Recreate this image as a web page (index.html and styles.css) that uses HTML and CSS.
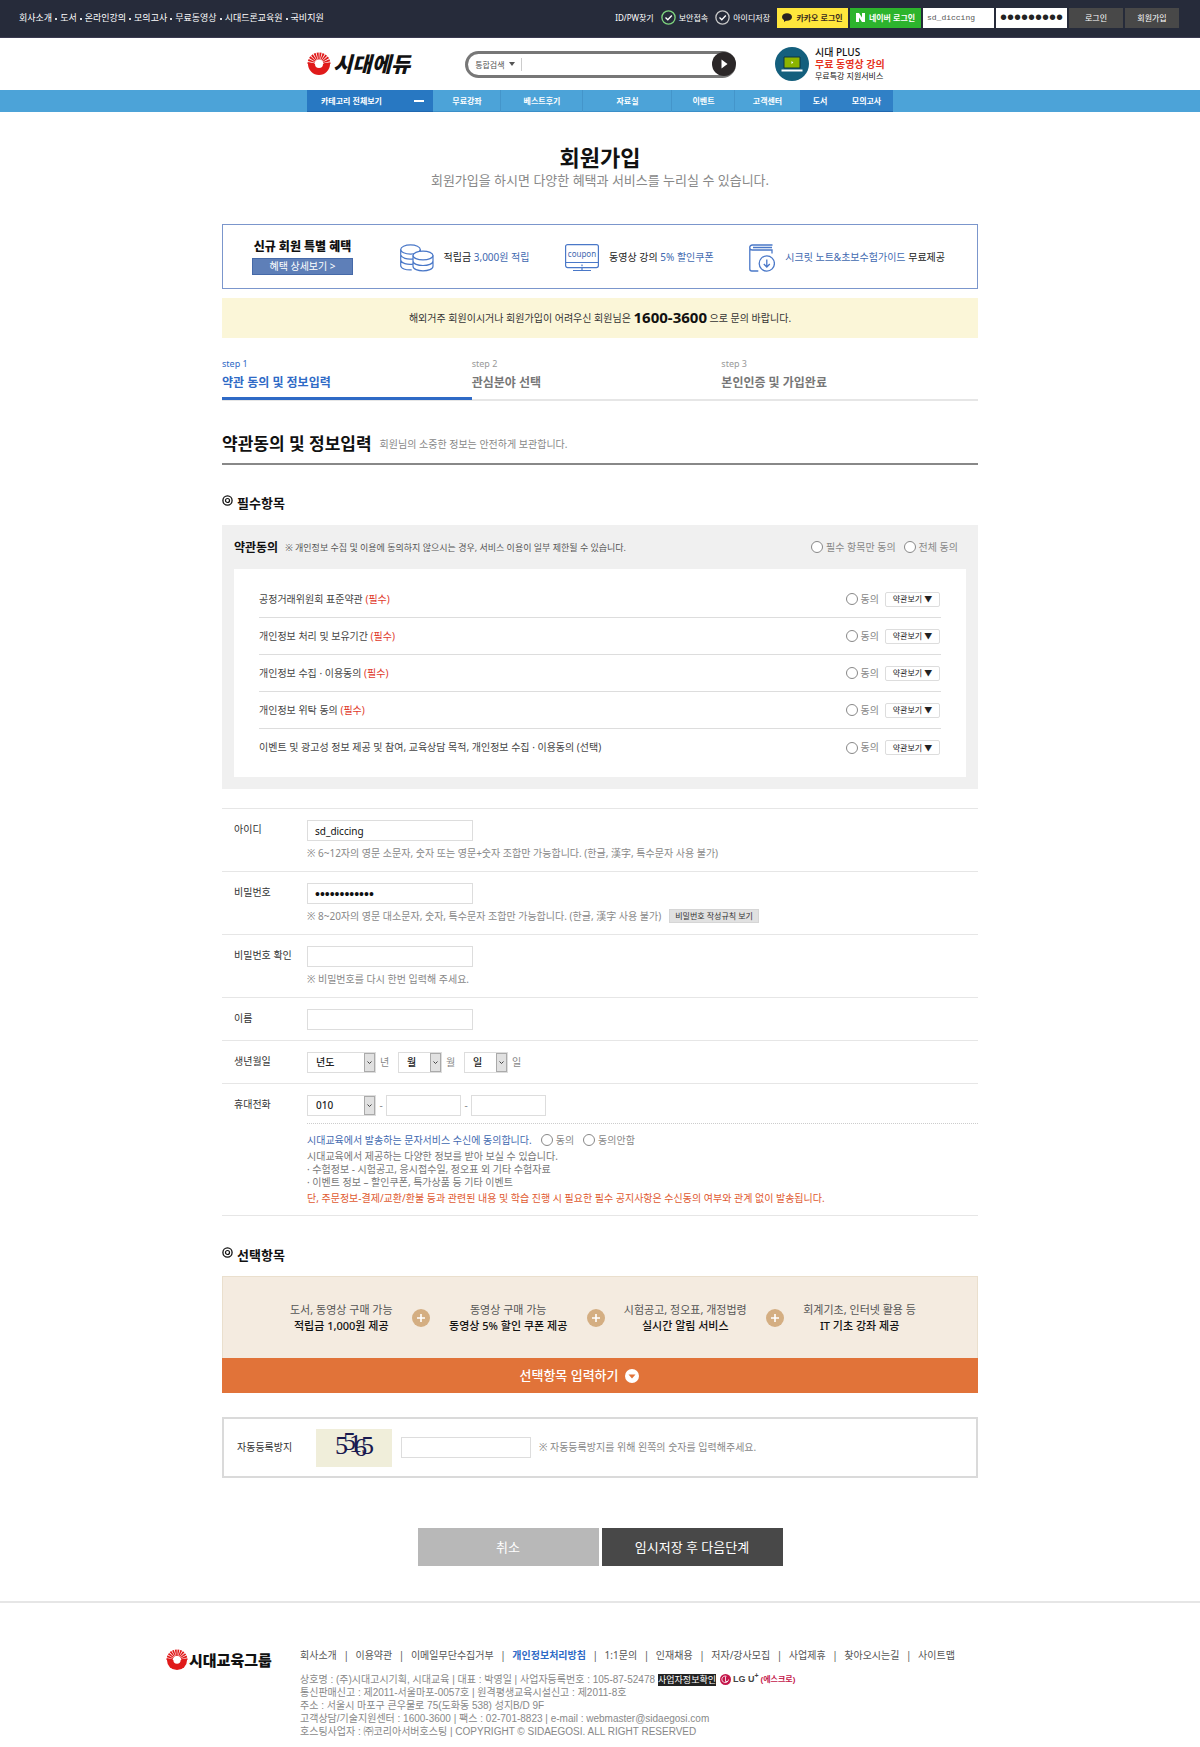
FILE: index.html
```html
<!DOCTYPE html>
<html lang="ko">
<head>
<meta charset="utf-8">
<meta name="viewport" content="width=device-width, initial-scale=1">
<title>회원가입 - 시대에듀</title>
<link rel="stylesheet" href="styles.css">
</head>
<body>
<svg width="0" height="0" class="defs" aria-hidden="true">
  <symbol id="sun" viewBox="0 0 24 24">
    <path d="M1 12a11 11 0 0 0 22 0z" fill="#e01a1a"/>
    <path d="M4 12a8 8 0 0 1 16 0" fill="none" stroke="#e01a1a" stroke-width="7" stroke-dasharray="1.5 .65"/>
    <circle cx="12" cy="12" r="4" fill="#fff"/>
  </symbol>
  <symbol id="target" viewBox="0 0 11 11">
    <circle cx="5.5" cy="5.5" r="4.6" fill="none" stroke="#111" stroke-width="1.3"/>
    <circle cx="5.5" cy="5.5" r="2" fill="none" stroke="#111" stroke-width="1.2"/>
  </symbol>
  <symbol id="plus" viewBox="0 0 18 18">
    <circle cx="9" cy="9" r="9" fill="#d4ae82"/>
    <path d="M9 5v8M5 9h8" stroke="#fff" stroke-width="1.6"/>
  </symbol>
</svg>

<header>
  <div class="topbar">
    <nav class="top-links">
      <a href="#">회사소개</a><i></i><a href="#">도서</a><i></i><a href="#">온라인강의</a><i></i><a href="#">모의고사</a><i></i><a href="#">무료동영상</a><i></i><a href="#">시대드론교육원</a><i></i><a href="#">국비지원</a>
    </nav>
    <form class="top-login">
      <a href="#">ID/PW찾기</a>
      <a href="#" class="check"><svg width="15" height="15" viewBox="0 0 15 15" fill="none"><circle cx="7.500" cy="7.500" r="6.600" stroke="#7fd67f" stroke-width="1.300"/><path d="M4.500 7.500l2.300 2.300 4-4.300" stroke="#fff" stroke-width="1.300"/></svg>보안접속</a>
      <a href="#" class="check"><svg width="15" height="15" viewBox="0 0 15 15" fill="none"><circle cx="7.500" cy="7.500" r="6.600" stroke="#c8c8c8" stroke-width="1.300"/><path d="M4.500 7.500l2.300 2.300 4-4.300" stroke="#fff" stroke-width="1.300"/></svg>아이디저장</a>
      <div class="top-fields">
        <button type="button" class="kakao"><svg width="10" height="9" viewBox="0 0 10 9"><ellipse cx="5" cy="4" rx="5" ry="3.800" fill="#2a2222"/><path d="M2 6v3l3-2z" fill="#2a2222"/></svg>카카오 로그인</button>
        <button type="button" class="naver"><svg width="9" height="9" viewBox="0 0 9 9"><path d="M0 0h3l3 4.500V0h3v9H6L3 4.500V9H0z" fill="#fff"/></svg>네이버 로그인</button>
        <input type="text" value="sd_diccing" aria-label="아이디">
        <input type="password" value="sidaeedu2011" aria-label="비밀번호" class="top-pw">
        <button type="button" class="grey">로그인</button>
        <button type="button" class="grey">회원가입</button>
      </div>
    </form>
  </div>

  <div class="brand wrap-narrow">
    <a href="#" class="logo"><svg width="24" height="24"><use href="#sun"/></svg><span>시대에듀</span></a>
    <form class="search">
      <button type="button" class="search-kind">통합검색<svg width="6" height="4" viewBox="0 0 6 4"><path d="M0 0h6L3 4z" fill="#555"/></svg></button>
      <input type="text" aria-label="검색어">
      <button type="button" class="search-go" aria-label="검색"><svg width="24" height="24" viewBox="0 0 24 24"><circle cx="12" cy="12" r="12" fill="#2b2728"/><path d="M9.500 7.500v9l6-4.500z" fill="#fff"/></svg></button>
    </form>
    <a href="#" class="plus-banner">
      <svg width="34" height="34" viewBox="0 0 34 34"><circle cx="17" cy="17" r="17" fill="#145f7d"/><path d="M9 10h16v11H9z" fill="#8cb400" stroke="#0d3442"/><path d="M6.500 22.500h21v2h-21z" fill="#fff"/><path d="M16.500 14l1.800 1.500-1.800 1.500z" fill="#fff"/></svg>
      <span class="plus-text"><b>시대 PLUS</b><strong>무료 동영상 강의</strong><small>무료특강 지원서비스</small></span>
    </a>
  </div>

  <nav class="gnb">
    <div class="gnb-inner wrap-narrow">
      <a href="#" class="gnb-all">카테고리 전체보기<svg width="10" height="2"><path d="M0 1h10" stroke="#fff" stroke-width="2"/></svg></a>
      <a href="#">무료강좌</a><a href="#">베스트후기</a><a href="#">자료실</a><a href="#">이벤트</a><a href="#">고객센터</a>
      <a href="#" class="gnb-dark">도서</a><a href="#" class="gnb-dark">모의고사</a>
    </div>
  </nav>
</header>

<main class="wrap">
  <h1>회원가입</h1>
  <p class="lead">회원가입을 하시면 다양한 혜택과 서비스를 누리실 수 있습니다.</p>

  <section class="benefits">
    <div class="benefit-head">
      <h2>신규 회원 특별 혜택</h2>
      <button type="button">혜택 상세보기 &gt;</button>
    </div>
    <div class="benefit">
      <svg width="34" height="28" viewBox="0 0 34 28" fill="none" stroke="#4a78c8" stroke-width="1.200"><ellipse cx="10.500" cy="5.500" rx="9.800" ry="4.600"/><path d="M.7 5.500v16c0 3 5 4.800 11 4.400M.7 11c1 3 6 4.800 12.500 4M.7 16.200c1 3 6 4.800 12.500 4M20.300 5.500v2"/><ellipse cx="23" cy="11.500" rx="10" ry="4.400" fill="#fff"/><path d="M13 11.500v10.800c0 6 20 6 20 0V11.500M13 17c0 6 20 6 20 0"/></svg>
      <p>적립금 <em>3,000원 적립</em></p>
    </div>
    <div class="benefit">
      <svg width="34" height="28" viewBox="0 0 34 28" fill="none" stroke="#4a78c8" stroke-width="1.200"><rect x=".6" y=".6" width="32.800" height="23" rx="2"/><path d="M1 18.500h32M8 26.500h18M17 20.500v1.800M17 24v2"/><text x="17" y="12.500" text-anchor="middle" class="coupon-text">coupon</text></svg>
      <p>동영상 강의 <em>5% 할인쿠폰</em></p>
    </div>
    <div class="benefit">
      <svg width="26" height="28" viewBox="0 0 26 28" fill="none" stroke="#4a78c8" stroke-width="1.300"><path d="M23.500 1H3.500C-.2 1-.2 6 3.500 6h19.500v3.500M.8 3.500V25c0 1.200.8 2 2 2h6.500M4 3.500h19"/><circle cx="17.800" cy="19.500" r="7.600"/><path d="M17.800 15.500v7M14.800 20l3 3 3-3"/></svg>
      <p><em>시크릿 노트&amp;초보수험가이드</em> 무료제공</p>
    </div>
  </section>

  <p class="notice">해외거주 회원이시거나 회원가입이 어려우신 회원님은 <strong>1600-3600</strong> 으로 문의 바랍니다.</p>

  <ol class="steps">
    <li class="current"><span>step 1</span><b>약관 동의 및 정보입력</b></li>
    <li><span>step 2</span><b>관심분야 선택</b></li>
    <li><span>step 3</span><b>본인인증 및 가입완료</b></li>
  </ol>

  <div class="section-head"><h2>약관동의 및 정보입력</h2><p>회원님의 소중한 정보는 안전하게 보관합니다.</p></div>

  <form>
    <h3 class="group-title"><svg width="11" height="11"><use href="#target"/></svg>필수항목</h3>
    <section class="terms">
      <div class="terms-head">
        <h4>약관동의</h4>
        <p>※ 개인정보 수집 및 이용에 동의하지 않으시는 경우, 서비스 이용이 일부 제한될 수 있습니다.</p>
        <div class="terms-all">
          <label class="radio"><input type="radio" name="all">필수 항목만 동의</label>
          <label class="radio"><input type="radio" name="all">전체 동의</label>
        </div>
      </div>
      <ul class="terms-list">
        <li><span>공정거래위원회 표준약관 <em>(필수)</em></span><label class="radio"><input type="radio" name="t1">동의</label><button type="button">약관보기 ▼</button></li>
        <li><span>개인정보 처리 및 보유기간 <em>(필수)</em></span><label class="radio"><input type="radio" name="t2">동의</label><button type="button">약관보기 ▼</button></li>
        <li><span>개인정보 수집 · 이용동의 <em>(필수)</em></span><label class="radio"><input type="radio" name="t3">동의</label><button type="button">약관보기 ▼</button></li>
        <li><span>개인정보 위탁 동의 <em>(필수)</em></span><label class="radio"><input type="radio" name="t4">동의</label><button type="button">약관보기 ▼</button></li>
        <li><span>이벤트 및 광고성 정보 제공 및 참여, 교육상담 목적, 개인정보 수집 · 이용동의 (선택)</span><label class="radio"><input type="radio" name="t5">동의</label><button type="button">약관보기 ▼</button></li>
      </ul>
    </section>

    <div class="fields">
      <div class="field">
        <label class="name" for="uid">아이디</label>
        <div class="control">
          <input class="text" type="text" id="uid" value="sd_diccing">
          <p class="hint">※ 6~12자의 영문 소문자, 숫자 또는 영문+숫자 조합만 가능합니다. (한글, 漢字, 특수문자 사용 불가)</p>
        </div>
      </div>
      <div class="field">
        <label class="name" for="pw">비밀번호</label>
        <div class="control">
          <input class="text" type="password" id="pw" value="sidaeedu2011">
          <p class="hint">※ 8~20자의 영문 대소문자, 숫자, 특수문자 조합만 가능합니다. (한글, 漢字 사용 불가)<button type="button">비밀번호 작성규칙 보기</button></p>
        </div>
      </div>
      <div class="field">
        <label class="name" for="pw2">비밀번호 확인</label>
        <div class="control">
          <input class="text" type="password" id="pw2">
          <p class="hint">※ 비밀번호를 다시 한번 입력해 주세요.</p>
        </div>
      </div>
      <div class="field">
        <label class="name" for="uname">이름</label>
        <div class="control"><input class="text" type="text" id="uname"></div>
      </div>
      <div class="field">
        <label class="name" for="year">생년월일</label>
        <div class="control">
          <div class="inline">
            <select id="year" class="wide"><option>년도</option></select><label for="year" class="unit">년</label>
            <select id="month"><option>월</option></select><label for="month" class="unit">월</label>
            <select id="day"><option>일</option></select><label for="day" class="unit">일</label>
          </div>
        </div>
      </div>
      <div class="field">
        <label class="name" for="tel1">휴대전화</label>
        <div class="control">
          <div class="inline">
            <select id="tel1" class="wide"><option>010</option></select><span class="dash">-</span>
            <input class="text tel" type="text" aria-label="휴대전화 가운데 자리"><span class="dash">-</span>
            <input class="text tel" type="text" aria-label="휴대전화 끝자리">
          </div>
          <div class="sms">
            <div class="sms-agree"><span>시대교육에서 발송하는 문자서비스 수신에 동의합니다.</span><label class="radio"><input type="radio" name="sms">동의</label><label class="radio"><input type="radio" name="sms">동의안함</label></div>
            <p>시대교육에서 제공하는 다양한 정보를 받아 보실 수 있습니다.<br>· 수험정보 - 시험공고, 응시접수일, 정오표 외 기타 수험자료<br>· 이벤트 정보 – 할인쿠폰, 특가상품 등 기타 이벤트</p>
            <p class="warn">단, 주문정보-결제/교환/환불 등과 관련된 내용 및 학습 진행 시 필요한 필수 공지사항은 수신동의 여부와 관계 없이 발송됩니다.</p>
          </div>
        </div>
      </div>
    </div>

    <h3 class="group-title optional"><svg width="11" height="11"><use href="#target"/></svg>선택항목</h3>
    <div class="perks">
      <p>도서, 동영상 구매 가능<b>적립금 1,000원 제공</b></p>
      <svg width="18" height="18"><use href="#plus"/></svg>
      <p>동영상 구매 가능<b>동영상 5% 할인 쿠폰 제공</b></p>
      <svg width="18" height="18"><use href="#plus"/></svg>
      <p>시험공고, 정오표, 개정법령<b>실시간 알림 서비스</b></p>
      <svg width="18" height="18"><use href="#plus"/></svg>
      <p>회계기초, 인터넷 활용 등<b>IT 기초 강좌 제공</b></p>
    </div>
    <button type="button" class="expand">선택항목 입력하기<svg width="14" height="14" viewBox="0 0 14 14"><circle cx="7" cy="7" r="7" fill="#fff"/><path d="M3.500 5.500h7L7 9.500z" fill="#e17339"/></svg></button>

    <div class="captcha">
      <label for="cap">자동등록방지</label>
      <svg width="76" height="38" viewBox="0 0 76 38" class="captcha-img"><rect width="76" height="38" fill="#f0eeda"/><text x="19 27 33 38 45" y="25 21 23 27 25">55165</text></svg>
      <input class="text" type="text" id="cap">
      <p>※ 자동등록방지를 위해 왼쪽의 숫자를 입력해주세요.</p>
    </div>

    <div class="actions">
      <button type="button" class="cancel">취소</button>
      <button type="submit" class="next">임시저장 후 다음단계</button>
    </div>
  </form>
</main>

<footer>
  <div class="footer-inner">
    <a href="#" class="footer-logo"><svg width="22" height="22"><use href="#sun"/></svg><span>시대교육그룹</span></a>
    <div class="footer-body">
      <nav class="footer-links">
        <a href="#">회사소개</a><i>|</i><a href="#">이용약관</a><i>|</i><a href="#">이메일무단수집거부</a><i>|</i><a href="#" class="privacy">개인정보처리방침</a><i>|</i><a href="#">1:1문의</a><i>|</i><a href="#">인재채용</a><i>|</i><a href="#">저자/강사모집</a><i>|</i><a href="#">사업제휴</a><i>|</i><a href="#">찾아오시는길</a><i>|</i><a href="#">사이트맵</a>
      </nav>
      <address>
        <div class="biz">상호명 : (주)시대고시기획, 시대교육 | 대표 : 박영일 | 사업자등록번호 : 105-87-52478 <a href="#" class="biz-check">사업자정보확인</a><a href="#" class="lg"><svg width="11" height="11" viewBox="0 0 11 11"><circle cx="5.500" cy="5.500" r="5.500" fill="#c4164a"/><path d="M5.500 2.500v5H8M8.500 5.500A3.300 3.300 0 1 1 6.500 2.300" stroke="#fff" stroke-width=".8" fill="none"/></svg><b>LG U<sup>+</sup></b><strong>(에스크로)</strong></a></div>
        <div>통신판매신고 : 제2011-서울마포-0057호 | 원격평생교육시설신고 : 제2011-8호</div>
        <div>주소 : 서울시 마포구 큰우물로 75(도화동 538) 성지B/D 9F</div>
        <div>고객상담/기술지원센터 : 1600-3600 | 팩스 : 02-701-8823 | e-mail : webmaster@sidaegosi.com</div>
        <div>호스팅사업자 : ㈜코리아서버호스팅 | COPYRIGHT © SIDAEGOSI. ALL RIGHT RESERVED</div>
      </address>
    </div>
  </div>
</footer>
</body>
</html>
```
FILE: styles.css
```css
:root {
  --line: #e6e6e6;
  --blue: #2f6ac6;
  --grey: #888;
}

* { box-sizing: border-box; }

body {
  margin: 0;
  background: #fff;
  color: #333;
  font: 10px/13px "Noto Sans", "Noto Sans CJK KR", sans-serif;
}

h1, h2, h3, h4, p, ul, ol { margin: 0; padding: 0; }
ul, ol { list-style: none; }
a { color: inherit; text-decoration: none; }
em, i, address { font-style: normal; }
svg { flex: none; }
.defs { position: absolute; }

button, input, select {
  margin: 0;
  padding: 0;
  border: 0;
  border-radius: 0;
  font: inherit;
  color: inherit;
}

.wrap { max-width: 756px; margin: 0 auto; }
.wrap-narrow { max-width: 586px; margin: 0 auto; }

/* Top bar */
.topbar {
  display: flex;
  justify-content: space-between;
  align-items: center;
  height: 38px;
  padding: 0 21px 2px 19px;
  background: #262b3a;
  border-bottom: 1px solid #3a3a50;
  color: #fff;
  font-size: 8px;
}
.top-links { display: flex; align-items: center; font-size: 9px; }
.top-links i { width: 2px; height: 2px; margin: 2px 3px 0; background: #ddd; }
.top-login { display: flex; align-items: center; gap: 7px; }
.check { display: flex; align-items: center; gap: 3px; }
.top-fields { display: flex; gap: 2px; }
.top-fields button {
  display: flex;
  align-items: center;
  justify-content: center;
  gap: 4px;
  height: 20px;
}
.top-fields input { width: 71px; height: 20px; padding: 0 4px; background: #fff; color: #555; font-family: "Liberation Mono", monospace; }
.top-fields .top-pw { font: 20px/20px "Liberation Sans", sans-serif; color: #222; }
.top-fields .kakao { width: 71px; background: #ffe63c; color: #3a2a1c; font-weight: 700; }
.top-fields .naver { width: 71px; background: #2db42d; font-weight: 700; }
.top-fields .grey { width: 54px; background: #484848; }

/* Brand row */
.brand {
  display: flex;
  align-items: center;
  justify-content: space-between;
  height: 52px;
}
.logo { display: flex; align-items: center; gap: 2px; color: #111; font-size: 21px; font-weight: 900; font-style: italic; line-height: 24px; }
.search {
  display: flex;
  align-items: center;
  width: 271px;
  height: 27px;
  margin-left: 16px;
  padding-left: 7px;
  border: 3px solid #777;
  border-right: 0;
  border-radius: 14px;
}
.search-kind { display: flex; align-items: center; gap: 4px; background: none; font-size: 8px; color: #555; }
.search input { flex: 1; min-width: 0; height: 13px; margin-left: 6px; border-left: 1px solid #ccc; outline: 0; }
.search-go { display: flex; border-radius: 12px; background: none; }
.plus-banner { display: flex; align-items: center; gap: 6px; width: 118px; color: #111; }
.plus-text { display: flex; flex-direction: column; line-height: 12px; white-space: nowrap; }
.plus-text b { font-weight: 500; }
.plus-text strong { color: #e6321e; }
.plus-text small { font-size: 8px; }

/* Main navigation */
.gnb { background: #4ca3d8; color: #fff; font-size: 8px; font-weight: 700; }
.gnb-inner {
  display: grid;
  grid-template-columns: 126fr 68fr 82fr 89fr 63fr 65fr 40fr 53fr;
}
.gnb a { display: flex; align-items: center; justify-content: center; height: 22px; border-bottom: 1px solid #3b8fc8; }
.gnb a:not(.gnb-all) + a:not(.gnb-dark) { box-shadow: -1px 0 #4495ca; }
.gnb .gnb-all { justify-content: space-between; padding: 0 9px 0 14px; background: #2878c2; border-color: #2068b0; }
.gnb .gnb-dark { background: #3080c6; border-color: #2068b0; }

/* Heading */
h1 { margin-top: 33px; color: #111; font-size: 22px; line-height: 24px; font-weight: 700; text-align: center; }
.lead { margin-top: 2px; color: var(--grey); font-size: 13px; line-height: 18px; text-align: center; }

.benefits {
  display: flex;
  align-items: center;
  justify-content: space-between;
  height: 65px;
  margin-top: 35px;
  padding: 0 32px 0 29px;
  border: 1px solid #7b96cc;
  color: #222;
}
.benefit-head { width: 101px; margin-right: 11px; }
.benefit-head h2 { color: #111; font-size: 12px; line-height: 15px; font-weight: 900; text-align: center; white-space: nowrap; }
.benefit-head button { width: 100%; height: 17px; margin-top: 4px; background: #5e7fb8; border: 1px solid #4569a8; color: #fff; display: block; line-height: 15px; }
.benefit { display: flex; align-items: center; gap: 10px; padding-top: 2px; white-space: nowrap; }
.benefit em { color: #3f69b0; }
.coupon-text { font: 8px "Noto Sans", sans-serif; fill: #3f69b0; stroke: none; }

.notice { margin-top: 9px; background: #fbf6d8; line-height: 40px; text-align: center; }
.notice strong { color: #111; font-size: 15px; vertical-align: -1px; line-height: 20px; }

/* Steps */
.steps { display: flex; margin-top: 20px; border-bottom: 2px solid var(--line); color: #777; }
.steps li { flex: 1 1 250px; height: 41px; }
.steps li:last-child { flex-basis: 257px; }
.steps span { display: block; font-size: 9px; line-height: 12px; color: #999; }
.steps b { display: block; margin-top: 5px; font-size: 12px; line-height: 16px; }
.steps .current { height: 42px; margin-bottom: -1px; border-bottom: 3px solid var(--blue); color: var(--blue); }
.steps .current span { color: var(--blue); }

.section-head { display: flex; align-items: center; gap: 8px; margin-top: 32px; padding-bottom: 8px; border-bottom: 2px solid #888; color: var(--grey); }
.section-head h2 { color: #111; font-size: 17px; line-height: 22px; }
.group-title { display: flex; gap: 4px; margin-top: 30px; color: #111; font-size: 13px; line-height: 17px; }

/* Terms */
.terms { margin-top: 13px; padding: 0 12px 12px; background: #f0f0f0; }
.terms-head { display: flex; align-items: center; height: 44px; color: #555; }
.terms-head h4 { margin-right: 7px; color: #111; font-size: 12px; }
.terms-head p { font-size: 9px; }
.terms-all { display: flex; gap: 8px; margin-left: auto; padding-right: 8px; }
.radio { display: flex; align-items: center; gap: 3px; color: var(--grey); }
.radio input { appearance: none; width: 12px; height: 12px; border: 1px solid #888; border-radius: 50%; background: #fff; }
.radio input:checked { box-shadow: inset 0 0 0 3px #fff; background: var(--blue); }
.terms-list { padding: 12px 25px 11px; background: #fff; }
.terms-list li { display: flex; align-items: center; height: 37px; border-bottom: 1px solid #ddd; color: #444; }
.terms-list li:last-child { border-bottom: 0; }
.terms-list span { flex: 1; }
.terms-list em { color: #e0392b; }
.terms-list button { width: 55px; height: 15px; margin: 0 1px 0 6px; border: 1px solid #ddd; border-radius: 2px; background: #fff; font-size: 8px; line-height: 12px; color: #222; }

/* Form fields */
.fields { margin-top: 19px; border-top: 1px solid var(--line); }
.field { display: flex; padding: 11px 0 10px; border-bottom: 1px solid var(--line); }
.name { width: 85px; padding: 2px 0 0 12px; line-height: 14px; }
.control { flex: 1; }
.text { display: block; width: 166px; height: 21px; padding: 0 7px; border: 1px solid #ddd; background: #fff; color: #111; }
.text[type=password] { font: 14px/18px "Liberation Sans", sans-serif; }
.hint { display: flex; align-items: center; margin-top: 4px; color: var(--grey); line-height: 16px; }
.hint button { height: 14px; margin-left: 8px; padding: 0 5px; border: 1px solid #d6d6d6; background: #e1e1e1; color: #333; font-size: 8px; line-height: 12px; }
.inline { display: flex; align-items: center; color: var(--grey); }
select {
  appearance: none;
  width: 44px;
  height: 21px;
  padding: 0 8px;
  border: 1px solid #ddd;
  background: #fff url("data:image/svg+xml,%3Csvg xmlns='http://www.w3.org/2000/svg' width='11' height='19'%3E%3Crect x='.5' y='.5' width='10' height='18' fill='%23e1e1e1' stroke='%23aaa'/%3E%3Cpath d='M3.500 8.500l2 2 2-2' fill='none' stroke='%23444'/%3E%3C/svg%3E") right center no-repeat;
  color: #222;
  font-weight: 500;
}
select.wide { width: 69px; }
.unit { width: 18px; margin-left: 4px; }
.dash { width: 10px; text-align: center; }
.tel { width: 75px; }
.sms { margin-top: 7px; padding-top: 9px; border-top: 1px dotted #ccc; color: #777; }
.sms-agree { display: flex; align-items: center; gap: 9px; height: 14px; }
.sms-agree span { color: #3f69b0; }
.sms p { margin-top: 3px; }
.sms .warn { color: #e0592f; }

/* Optional items */
.group-title.optional { margin-top: 31px; }
.perks {
  display: flex;
  align-items: center;
  justify-content: space-between;
  height: 82px;
  margin-top: 12px;
  padding: 0 61px 0 67px;
  border: 1px solid #eadfcd;
  border-bottom: 0;
  background: #f4ebe0;
  color: #555;
  font-size: 11px;
  line-height: 16px;
  text-align: center;
}
.perks b { display: block; color: #111; font-weight: 500; }
.expand { display: flex; align-items: center; justify-content: center; gap: 6px; width: 100%; height: 35px; padding-right: 42px; background: #e17339; color: #fff; font-size: 13px; font-weight: 500; }

.captcha { display: flex; align-items: center; height: 61px; margin-top: 24px; padding: 0 13px; border: 2px solid #dadada; color: var(--grey); }
.captcha label { width: 79px; color: #333; }
.captcha .text { width: 130px; margin: 0 8px 0 9px; }
.captcha-img text { font: 26px "Liberation Serif", serif; fill: #1a1a50; }

.actions { display: flex; justify-content: center; gap: 3px; margin-top: 50px; }
.actions button { width: 181px; height: 38px; background: #b8b8b8; color: #fff; font-size: 13px; }
.actions .next { background: #484848; }

/* Footer */
footer { margin-top: 35px; border-top: 2px solid var(--line); }
.footer-inner { display: flex; max-width: 868px; margin: 0 auto; padding: 45px 0 10px; }
.footer-logo { display: flex; gap: 1px; width: 134px; height: 24px; align-items: center; color: #111; font-size: 15px; font-weight: 900; line-height: 22px; }
.footer-links { display: flex; justify-content: space-between; max-width: 655px; margin-top: 1px; color: #555; }
.privacy { color: var(--blue); font-weight: 700; }
.footer-body { flex: 1; }
address { margin-top: 11px; color: var(--grey); font-family: "Liberation Sans", "Noto Sans CJK KR", sans-serif; }
.biz { display: flex; align-items: center; height: 13px; }
.biz-check { margin: 0 4px 0 3px; background: #222; color: #fff; font-size: 9px; line-height: 12px; }
.lg { display: flex; align-items: center; gap: 2px; color: #444; font-size: 8px; }
.lg b { font-size: 9px; line-height: 11px; }
.lg sup { font-size: 7px; line-height: 0; }
.lg strong { color: #c4164a; font-size: 8px; }
```
